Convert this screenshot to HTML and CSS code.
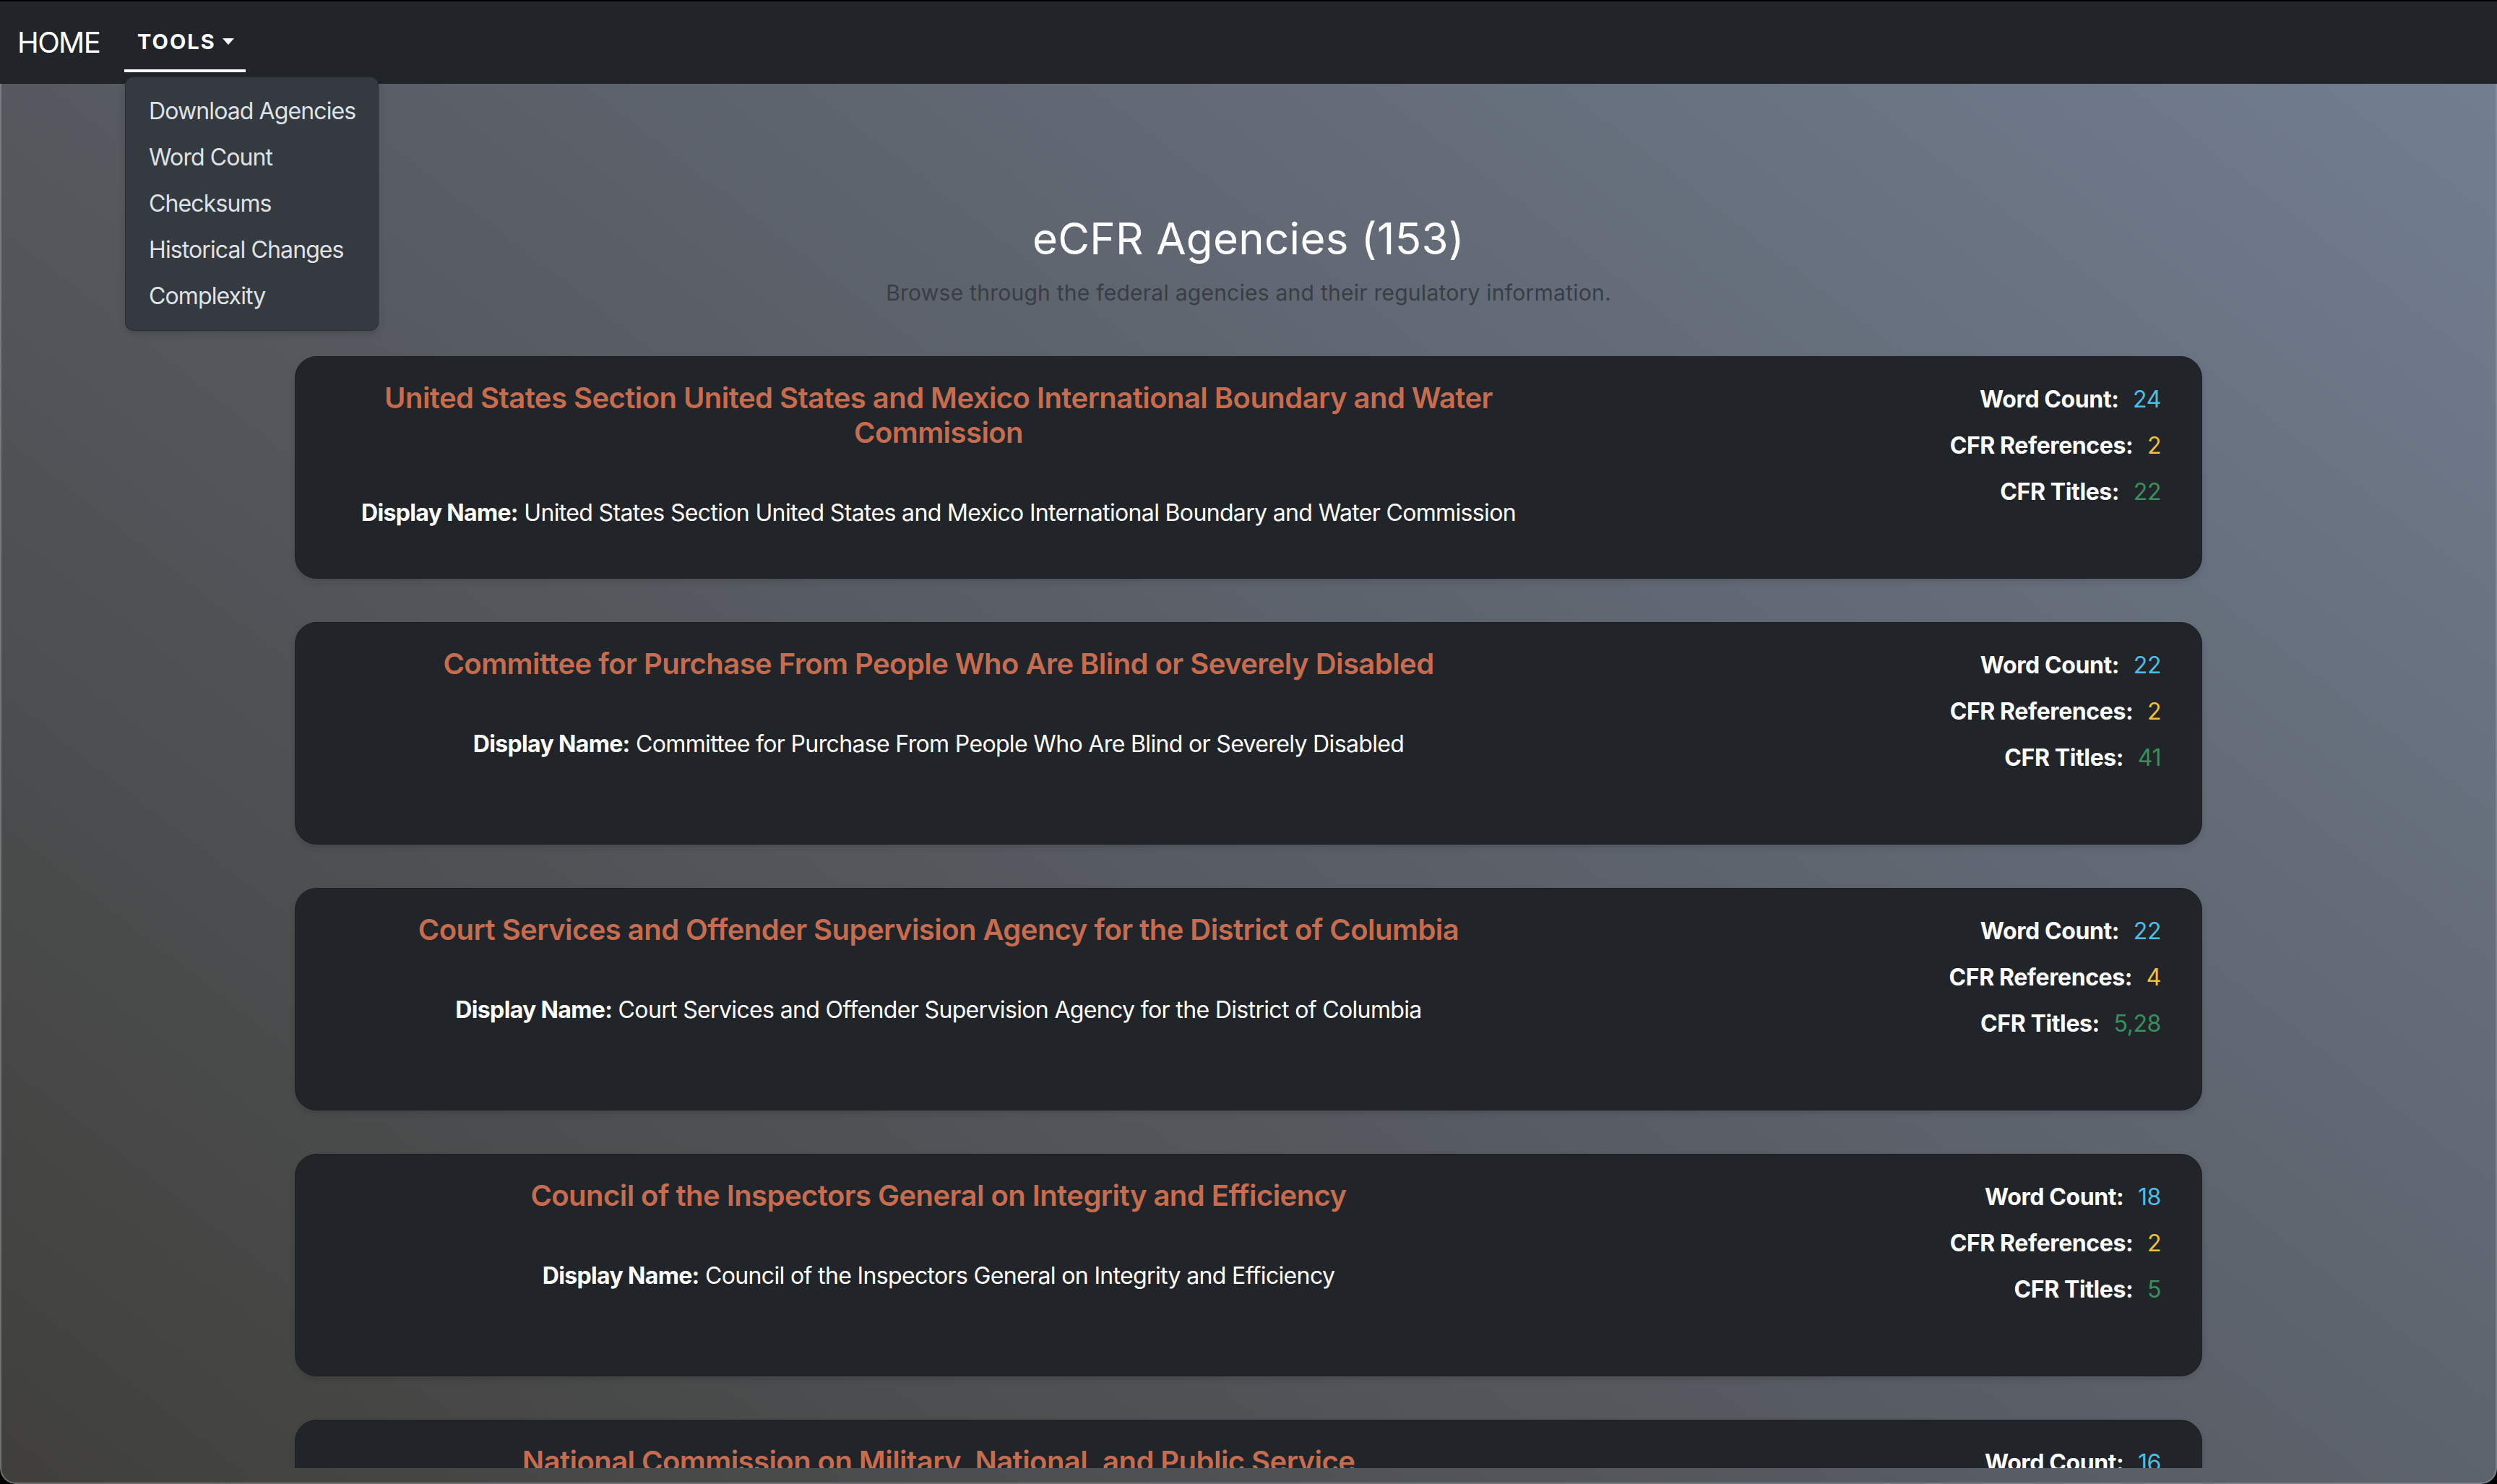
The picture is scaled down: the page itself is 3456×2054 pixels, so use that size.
FILE: index.html
```html
<!DOCTYPE html>
<html lang="en">
<head>
<meta charset="utf-8">
<title>eCFR Agencies</title>
<link rel="stylesheet" href="styles.css">
</head>
<body>
<div class="window">
  <nav class="navbar">
    <a class="brand" href="#">HOME</a>
    <div class="nav-item">
      <a class="nav-link" href="#">TOOLS<span class="caret"></span></a>
      <ul class="dropdown">
        <li><a class="dropdown-item" href="#">Download Agencies</a></li>
        <li><a class="dropdown-item" href="#">Word Count</a></li>
        <li><a class="dropdown-item" href="#">Checksums</a></li>
        <li><a class="dropdown-item" href="#">Historical Changes</a></li>
        <li><a class="dropdown-item" href="#">Complexity</a></li>
      </ul>
    </div>
  </nav>

  <main class="main">
    <header class="page-head">
      <h1 class="page-title">eCFR Agencies (153)</h1>
      <p class="page-sub">Browse through the federal agencies and their regulatory information.</p>
    </header>

    <section class="cards">
      <article class="card">
        <div class="card-main">
          <h5 class="agency-title">United States Section United States and Mexico International Boundary and Water Commission</h5>
          <p class="display"><strong>Display Name:</strong> United States Section United States and Mexico International Boundary and Water Commission</p>
        </div>
        <div class="card-stats">
          <p class="stat"><span class="stat-label">Word Count:</span> <span class="stat-value wc">24</span></p>
          <p class="stat"><span class="stat-label">CFR References:</span> <span class="stat-value refs">2</span></p>
          <p class="stat"><span class="stat-label">CFR Titles:</span> <span class="stat-value titles">22</span></p>
        </div>
      </article>

      <article class="card">
        <div class="card-main">
          <h5 class="agency-title">Committee for Purchase From People Who Are Blind or Severely Disabled</h5>
          <p class="display"><strong>Display Name:</strong> Committee for Purchase From People Who Are Blind or Severely Disabled</p>
        </div>
        <div class="card-stats">
          <p class="stat"><span class="stat-label">Word Count:</span> <span class="stat-value wc">22</span></p>
          <p class="stat"><span class="stat-label">CFR References:</span> <span class="stat-value refs">2</span></p>
          <p class="stat"><span class="stat-label">CFR Titles:</span> <span class="stat-value titles">41</span></p>
        </div>
      </article>

      <article class="card">
        <div class="card-main">
          <h5 class="agency-title">Court Services and Offender Supervision Agency for the District of Columbia</h5>
          <p class="display"><strong>Display Name:</strong> Court Services and Offender Supervision Agency for the District of Columbia</p>
        </div>
        <div class="card-stats">
          <p class="stat"><span class="stat-label">Word Count:</span> <span class="stat-value wc">22</span></p>
          <p class="stat"><span class="stat-label">CFR References:</span> <span class="stat-value refs">4</span></p>
          <p class="stat"><span class="stat-label">CFR Titles:</span> <span class="stat-value titles">5,28</span></p>
        </div>
      </article>

      <article class="card">
        <div class="card-main">
          <h5 class="agency-title">Council of the Inspectors General on Integrity and Efficiency</h5>
          <p class="display"><strong>Display Name:</strong> Council of the Inspectors General on Integrity and Efficiency</p>
        </div>
        <div class="card-stats">
          <p class="stat"><span class="stat-label">Word Count:</span> <span class="stat-value wc">18</span></p>
          <p class="stat"><span class="stat-label">CFR References:</span> <span class="stat-value refs">2</span></p>
          <p class="stat"><span class="stat-label">CFR Titles:</span> <span class="stat-value titles">5</span></p>
        </div>
      </article>

      <article class="card">
        <div class="card-main">
          <h5 class="agency-title">National Commission on Military, National, and Public Service</h5>
          <p class="display"><strong>Display Name:</strong> National Commission on Military, National, and Public Service</p>
        </div>
        <div class="card-stats">
          <p class="stat"><span class="stat-label">Word Count:</span> <span class="stat-value wc">16</span></p>
        </div>
      </article>
    </section>
  </main>
  <div class="window-foot"></div>
</div>
</body>
</html>
```

FILE: styles.css
```css
* { box-sizing: border-box; }

html, body {
  margin: 0;
  padding: 0;
  background: #000;
  font-family: Inter, "Noto Sans", "Liberation Sans", sans-serif;
  overflow: hidden;
}

.window {
  position: relative;
  height: 2052px;
  margin-top: 2px;
  display: flex;
  flex-direction: column;
  border-radius: 0 0 22px 22px;
  overflow: hidden;
  background: linear-gradient(38deg, #403f3b 0%, #5a5f67 50%, #737f92 100%);
}

.window::after {
  content: "";
  position: absolute;
  inset: 0;
  border: 2px solid rgba(150, 155, 162, 0.55);
  border-top: none;
  border-radius: 0 0 22px 22px;
  pointer-events: none;
}

/* ---------- navbar ---------- */
.navbar {
  flex: 0 0 114px;
  display: flex;
  align-items: center;
  padding: 0 24px;
  background: #212529;
  position: relative;
  z-index: 5;
}

.brand {
  color: #fff;
  text-decoration: none;
  font-size: 40px;
  line-height: 48px;
  font-weight: 400;
  letter-spacing: -1.6px;
}

.nav-item {
  position: relative;
  margin-left: 34px;
}

.nav-link {
  height: 82px;
  display: flex;
  align-items: center;
  padding: 0 16px 0 18px;
  border-bottom: 4px solid #fff;
  color: #fff;
  text-decoration: none;
  font-size: 29px;
  font-weight: 700;
  letter-spacing: 0.07em;
  text-transform: uppercase;
}

.caret {
  display: inline-block;
  margin-left: 9px;
  border-top: 9px solid #fff;
  border-left: 8.5px solid transparent;
  border-right: 8.5px solid transparent;
}

.dropdown {
  position: absolute;
  top: 88px;
  left: 1px;
  width: 351px;
  margin: 0;
  padding: 15px 0;
  list-style: none;
  background: #343a40;
  border: 1px solid rgba(0, 0, 0, 0.18);
  border-radius: 12px;
  box-shadow: 0 4px 10px rgba(0, 0, 0, 0.15);
}

.dropdown-item {
  display: block;
  padding: 8px 32px;
  font-size: 32px;
  line-height: 48px;
  color: #dee2e6;
  text-decoration: none;
  white-space: nowrap;
  letter-spacing: -0.9px;
}

/* ---------- main ---------- */
.main {
  flex: 1 1 auto;
  overflow: hidden;
  padding-top: 179px;
}

.window-foot {
  flex: 0 0 22px;
}

.page-head {
  text-align: center;
}

.page-title {
  margin: 0;
  font-size: 60px;
  line-height: 70px;
  font-weight: 400;
  color: #fff;
  letter-spacing: 0.3px;
}

.page-sub {
  margin: 18px 0 0;
  font-size: 30px;
  line-height: 45px;
  color: #393d44;
  letter-spacing: 0.25px;
}

.cards {
  width: 2640px;
  margin: 65px auto 0;
  display: flex;
  flex-direction: column;
  gap: 60px;
}

.card {
  flex: 0 0 308px;
  height: 308px;
  display: grid;
  grid-template-columns: 2fr 1fr;
  align-items: start;
  padding: 33px 32px;
  background: #212529;
  border: 1px solid #1c1f23;
  border-radius: 30px;
  box-shadow: 0 4px 10px rgba(0, 0, 0, 0.12);
}

.card-main {
  padding: 0 24px;
  text-align: center;
}

.agency-title {
  margin: 0 0 63px;
  font-size: 40px;
  line-height: 48px;
  font-weight: 600;
  color: #c76c4f;
  letter-spacing: -0.55px;
}

.display {
  margin: 0;
  font-size: 32px;
  line-height: 48px;
  color: #fff;
  letter-spacing: -0.65px;
}

.display strong {
  font-weight: 700;
}

.card-stats {
  padding: 2px 24px 0;
  text-align: right;
}

.stat {
  margin: 0 0 16px;
  font-size: 32px;
  line-height: 48px;
  color: #fff;
  letter-spacing: -0.4px;
}

.stat-label {
  font-weight: 700;
}

.stat-value {
  margin-left: 11px;
  font-weight: 400;
}

.wc { color: #4fbde6; }
.refs { color: #f0bf3e; }
.titles { color: #3a8f5e; }
```
